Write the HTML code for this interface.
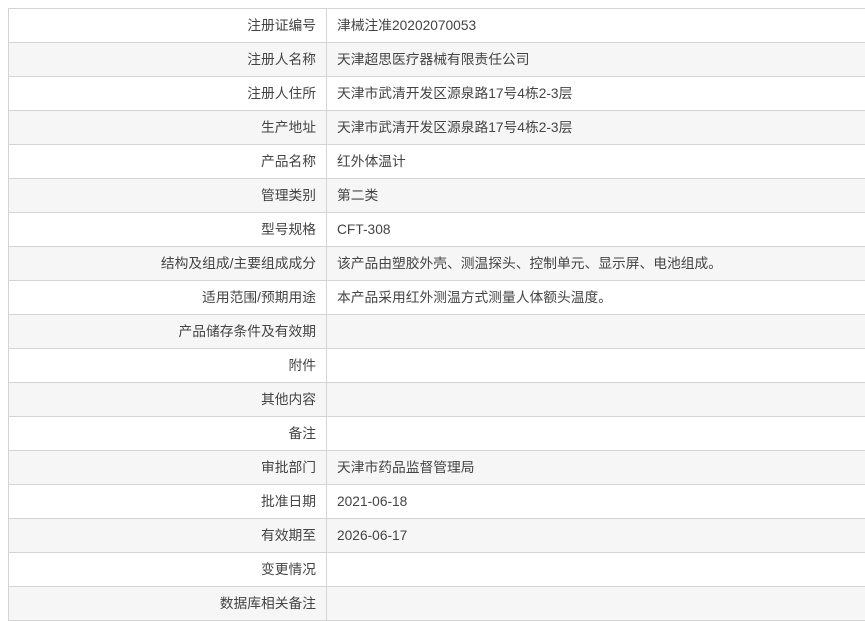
<!DOCTYPE html>
<html><head><style>
body{margin:0;background:#fff;font-family:"Liberation Sans","Noto Sans CJK SC",sans-serif;font-size:13.75px;color:#444}
table{position:absolute;left:8px;top:8px;width:870px;border-collapse:collapse}
td{height:33px;box-sizing:border-box;border:1px solid #d4d4d4;padding:0 10px;white-space:nowrap;font-size:13.75px;line-height:20px;vertical-align:middle}
td.l{width:318px;text-align:right}
tr{height:34px}
tr:nth-child(even) td{background:#f6f6f6}
</style></head><body><table>
<tr><td class="l">注册证编号</td><td>津械注准20202070053</td></tr>
<tr><td class="l">注册人名称</td><td>天津超思医疗器械有限责任公司</td></tr>
<tr><td class="l">注册人住所</td><td>天津市武清开发区源泉路17号4栋2-3层</td></tr>
<tr><td class="l">生产地址</td><td>天津市武清开发区源泉路17号4栋2-3层</td></tr>
<tr><td class="l">产品名称</td><td>红外体温计</td></tr>
<tr><td class="l">管理类别</td><td>第二类</td></tr>
<tr><td class="l">型号规格</td><td>CFT-308</td></tr>
<tr><td class="l">结构及组成/主要组成成分</td><td>该产品由塑胶外壳、测温探头、控制单元、显示屏、电池组成。</td></tr>
<tr><td class="l">适用范围/预期用途</td><td>本产品采用红外测温方式测量人体额头温度。</td></tr>
<tr><td class="l">产品储存条件及有效期</td><td></td></tr>
<tr><td class="l">附件</td><td></td></tr>
<tr><td class="l">其他内容</td><td></td></tr>
<tr><td class="l">备注</td><td></td></tr>
<tr><td class="l">审批部门</td><td>天津市药品监督管理局</td></tr>
<tr><td class="l">批准日期</td><td>2021-06-18</td></tr>
<tr><td class="l">有效期至</td><td>2026-06-17</td></tr>
<tr><td class="l">变更情况</td><td></td></tr>
<tr><td class="l">数据库相关备注</td><td></td></tr>
</table></body></html>
